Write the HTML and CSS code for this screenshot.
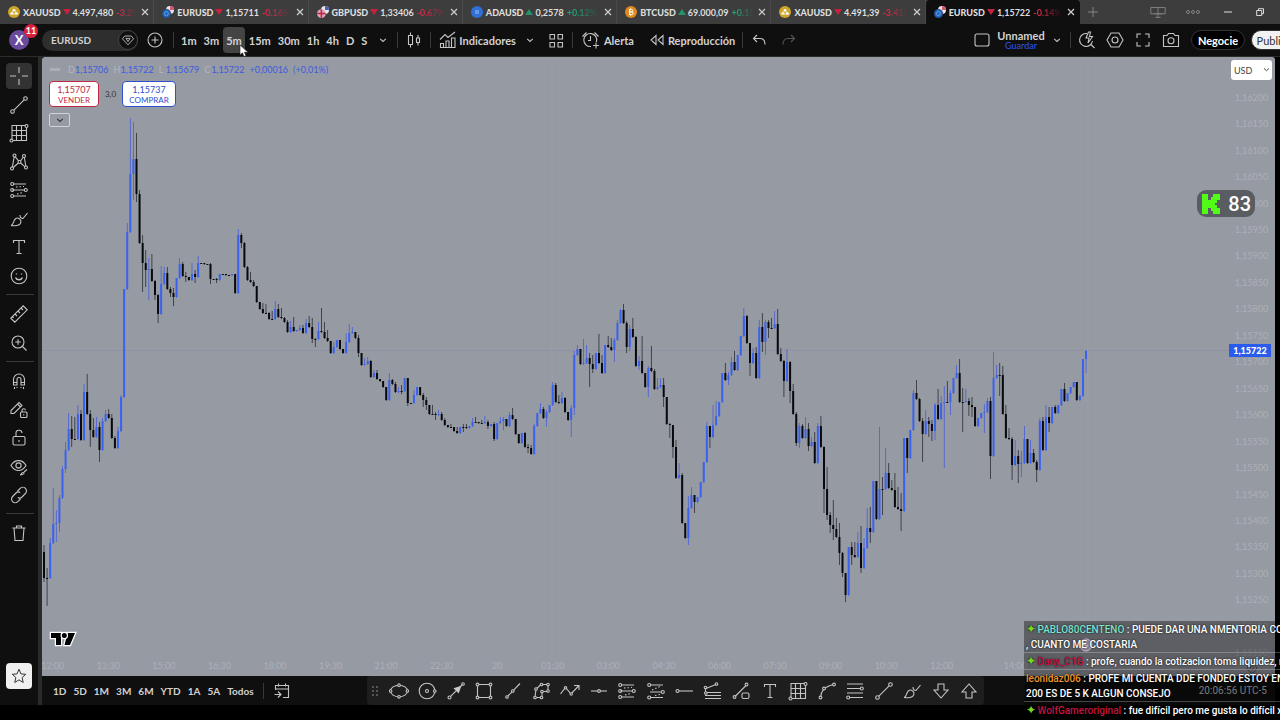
FILE: index.html
```html
<!DOCTYPE html>
<html lang="es">
<head>
    <meta charset="UTF-8">
    <meta name="viewport" content="width=device-width, initial-scale=1.0">
    <title>EURUSD 1,15722</title>
    <link rel="stylesheet" href="styles.css">
</head>
<body>
<svg class="sprite" aria-hidden="true">
    <symbol id="i-close" viewBox="0 0 10 10"><path d="M2 2l6 6M8 2l-6 6"/></symbol>
    <symbol id="i-chevron" viewBox="0 0 10 10"><path d="M2.2 3.8L5 6.4l2.8-2.6"/></symbol>
    <symbol id="i-gold" viewBox="0 0 12 12"><circle cx="6" cy="6" r="6" fill="#d0a52c" stroke="none"/><path d="M2 8.6l1-2.4h2l1 2.4zM6.2 8.6l1-2.4h2l1 2.4zM4.2 5.4l.9-2.2h1.9l.9 2.2z" fill="#fff" stroke="none"/></symbol>
    <symbol id="i-eur" viewBox="0 0 12 12"><circle cx="8" cy="4" r="4" fill="#e9e4ee" stroke="none"/><path d="M8 0a4 4 0 0 1 4 4H8z" fill="#d6566b" stroke="none"/><circle cx="4.4" cy="7.6" r="4.4" fill="#1c63c4" stroke="#3b3b3b" stroke-width=".6"/><circle cx="4.4" cy="7.6" r="2" fill="none" stroke="#6fa3d8" stroke-width=".9"/></symbol>
    <symbol id="i-gbp" viewBox="0 0 12 12"><circle cx="8" cy="4" r="4" fill="#e9e4ee" stroke="none"/><path d="M8 0a4 4 0 0 1 4 4H8z" fill="#4a5fb0" stroke="none"/><circle cx="4.4" cy="7.6" r="4.4" fill="#d9a9b8" stroke="none"/><path d="M4.4 3.4v8.4M.2 7.6h8.4" stroke="#c8203c" stroke-width="1.5"/></symbol>
    <symbol id="i-ada" viewBox="0 0 12 12"><circle cx="6" cy="6" r="6" fill="#2f6fd8" stroke="none"/><path d="M4 5h4M4 7h4" stroke="#a9c8ff" stroke-width=".9"/></symbol>
    <symbol id="i-btc" viewBox="0 0 12 12"><circle cx="6" cy="6" r="6" fill="#e08a20" stroke="none"/><path d="M4.6 3.2v5.6M4.6 3.4h1.8a1.2 1.2 0 0 1 0 2.5H4.6M4.6 5.9h2.2a1.3 1.3 0 0 1 0 2.7H4.6M5.6 2.4v1M5.6 8.6v1" stroke="#fff" stroke-width="1"/></symbol>
    <symbol id="i-cross" viewBox="0 0 20 20"><path d="M10 1v6M10 13v6M1 10h6M13 10h6"/></symbol>
    <symbol id="i-line" viewBox="0 0 20 20"><circle cx="3.5" cy="16.5" r="1.8"/><circle cx="16.5" cy="3.5" r="1.8"/><path d="M4.9 15.1L15.1 4.9"/></symbol>
    <symbol id="i-grid" viewBox="0 0 20 20"><path d="M3 17V2.500h13.500M17.500 5v12.500H4M7.500 2.500v15M12.500 2.500v15M2.500 7.500h15M2.500 12.500h15"/><circle cx="17.500" cy="3" r="1.500"/><circle cx="2.500" cy="17.500" r="1.500"/></symbol>
    <symbol id="i-pattern" viewBox="0 0 20 20"><circle cx="5.500" cy="3.500" r="1.500"/><circle cx="15" cy="4" r="1.500"/><circle cx="3" cy="16.500" r="1.500"/><circle cx="17" cy="15.500" r="1.500"/><circle cx="10.500" cy="10" r="1.500"/><path d="M5.200 5L3.300 15M6.300 4.800l3.300 4M4.200 15.500l5.200-4.500M11.500 9l2.700-3.700M15.300 5.500l1.500 8.500M11.600 11l4.200 3.600"/></symbol>
    <symbol id="i-fib" viewBox="0 0 20 20"><path d="M4 4h13M3 10h12M5 16h12"/><path d="M7 7l8-.5M8 14l6-1.500" stroke-dasharray="1.500 2"/><circle cx="3.200" cy="4" r="1.500"/><circle cx="3.200" cy="10" r="1.500"/><circle cx="16.800" cy="10" r="1.500"/><circle cx="3.200" cy="16" r="1.500"/></symbol>
    <symbol id="i-fib2" viewBox="0 0 20 20"><path d="M4 4h13M4 11h11M4 16.500h13"/><path d="M6 9l9-4M9 14.500l5-1" stroke-dasharray="1.500 2"/><circle cx="3.200" cy="4" r="1.500"/><circle cx="3.200" cy="16.500" r="1.500"/><circle cx="16.800" cy="11" r="1.500"/></symbol>
    <symbol id="i-fib3" viewBox="0 0 20 20"><path d="M2 3h16M2 7.500h13M2 12h16M5 16.500h13"/><circle cx="16.800" cy="7.500" r="1.500"/><circle cx="3.200" cy="16.500" r="1.500"/></symbol>
    <symbol id="i-brush" viewBox="0 0 20 20"><path d="M2 16.500c3-.500 2-5 4.500-6.800 2.500-1.700 6 .500 5.400 3.500-.6 3.300-5 4-9.900 3.300zM11 6c0 2 .8 3.500 3 3.500L18.500 4"/></symbol>
    <symbol id="i-text" viewBox="0 0 20 20"><path d="M4.500 6V3.500h11V6M10 3.500v13M7.500 16.500h5"/></symbol>
    <symbol id="i-smile" viewBox="0 0 20 20"><circle cx="10" cy="10" r="7.800"/><path d="M6.500 11.500c1.200 3 5.800 3 7 0M7.500 7.500v1M12.500 7.500v1" stroke-width="1.400"/></symbol>
    <symbol id="i-ruler" viewBox="0 0 20 20"><path d="M1.800 14.200L14.200 1.800l4 4L5.800 18.200zM6 10l2 2M9 7l2 2M12 4l2 2M3.500 12.500l1.200 1.200"/></symbol>
    <symbol id="i-zoom" viewBox="0 0 20 20"><circle cx="9" cy="9" r="6"/><path d="M13.500 13.500L17.500 17.500M9 6.200v5.600M6.200 9h5.600"/></symbol>
    <symbol id="i-magnet" viewBox="0 0 20 20"><path d="M4.500 14V8.500a5.500 5.500 0 0 1 11 0V14h-3.500V8.500a2 2 0 0 0-4 0V14zM4.500 11.500H8M12 11.500h3.500M5.500 16v2M8 16v1M12 16v1M14.500 16v2"/></symbol>
    <symbol id="i-pencil" viewBox="0 0 20 20"><path d="M2 13.500V10.500L10 2.500l3 3-8 8zM8.500 4l3 3"/><rect x="11.500" y="12" width="6.500" height="5.500" rx="1"/><path d="M13 12v-1.800a1.800 1.800 0 0 1 3.500 0M14.700 14.200v1.200"/></symbol>
    <symbol id="i-lock" viewBox="0 0 20 20"><rect x="4" y="8.500" width="12" height="8.500" rx="1.500"/><path d="M7 8.500V5.500a3 3 0 0 1 6-.5M10 12v2" /></symbol>
    <symbol id="i-eye" viewBox="0 0 20 20"><path d="M2 8.500C5.500 2 13.500 2 17 8.500c-1.500 2.500-4 5-7.500 5S3.500 11 2 8.500z"/><circle cx="9.500" cy="8.500" r="2.600"/><path d="M11 18c1.500 0 1-2.500 3-2.500s1 2.500-3 2.500zM15 15l3-2.500"/></symbol>
    <symbol id="i-link" viewBox="0 0 20 20"><path d="M8.500 6l2.700-2.700a3.500 3.500 0 0 1 5.200 5.200L13 12a3.500 3.500 0 0 1-4.200.5M11.500 14l-2.700 2.700a3.500 3.500 0 0 1-5.200-5.200L7 8a3.500 3.500 0 0 1 4.200-.5"/></symbol>
    <symbol id="i-trash" viewBox="0 0 20 20"><path d="M3.500 5h13M7.500 5V3h5v2M5 5l1 12.500h8L15 5"/></symbol>
    <symbol id="i-star" viewBox="0 0 20 20"><path d="M10 2.500l2.200 5.200 5.300.4-4 3.600 1.200 5.500L10 14.300l-4.700 2.900 1.200-5.500-4-3.600 5.300-.4z"/></symbol>
    <symbol id="i-ellipse" viewBox="0 0 20 20"><ellipse cx="10" cy="10" rx="8.500" ry="5.800"/><g class="dot"><circle cx="10" cy="4.200" r="1.300"/><circle cx="10" cy="15.800" r="1.300"/><circle cx="1.600" cy="10" r="1.300"/><circle cx="18.400" cy="10" r="1.300"/></g></symbol>
    <symbol id="i-circle" viewBox="0 0 20 20"><circle cx="10" cy="10" r="7.800"/><circle cx="10" cy="10" r="1.500"/><circle class="dot" cx="17.800" cy="10" r="1.300"/></symbol>
    <symbol id="i-arrow" viewBox="0 0 20 20"><circle cx="3.500" cy="16.500" r="1.500"/><circle cx="17" cy="3" r="1.300"/><path d="M4.600 15.400L16 4"/><path d="M14.500 5.500l-2 6-4-4z" fill="#d0d0d0"/></symbol>
    <symbol id="i-rect" viewBox="0 0 20 20"><path d="M3.500 3.500h13v13h-13z"/><g class="dot"><circle cx="3.500" cy="3.500" r="1.400"/><circle cx="16.500" cy="3.500" r="1.400"/><circle cx="3.500" cy="16.500" r="1.400"/><circle cx="16.500" cy="16.500" r="1.400"/></g></symbol>
    <symbol id="i-trend" viewBox="0 0 20 20"><path d="M4.500 15.500L17 2.500"/><g class="dot"><circle cx="4" cy="16" r="1.300"/><circle cx="9.800" cy="10" r="1.300"/></g></symbol>
    <symbol id="i-path" viewBox="0 0 20 20"><path d="M4 16.500L5 8l5-4.500h7v7h-6v6z"/><g class="dot"><circle cx="4" cy="16.500" r="1.300"/><circle cx="10.500" cy="16.500" r="1.300"/><circle cx="5" cy="8" r="1.300"/><circle cx="10.500" cy="3.500" r="1.300"/><circle cx="17" cy="3.500" r="1.300"/><circle cx="17" cy="10" r="1.300"/><circle cx="11" cy="10.500" r="1.300"/></g></symbol>
    <symbol id="i-poly" viewBox="0 0 20 20"><path d="M.5 13l5-6.500 5.500 6.500 7.500-8M14 4.500h5V9"/><g class="dot"><circle cx="5.500" cy="6.800" r="1.200"/><circle cx="11.200" cy="13" r="1.200"/></g></symbol>
    <symbol id="i-hline" viewBox="0 0 20 20"><path d="M2 10h16"/><circle class="dot" cx="10" cy="10" r="1.400"/></symbol>
    <symbol id="i-ray" viewBox="0 0 20 20"><path d="M4 10h15"/><circle class="dot" cx="3.500" cy="10" r="1.500"/></symbol>
    <symbol id="i-channel" viewBox="0 0 20 20"><path d="M3 7.500l11-4.500M2 11.500h16M2 14.500h16M2 17.500h16M2.500 7v5"/><g class="dot"><circle cx="2.500" cy="6.500" r="1.300"/><circle cx="13.500" cy="3" r="1.300"/><circle cx="2.800" cy="12" r="1.300"/></g></symbol>
    <symbol id="i-shape" viewBox="0 0 20 20"><path d="M4 15.500L15.500 4"/><g class="dot"><circle cx="3.500" cy="16" r="1.400"/><circle cx="15.500" cy="3.500" r="1.400"/></g><rect x="11" y="12" width="7" height="5.500" rx="1.500"/></symbol>
    <symbol id="i-curve" viewBox="0 0 20 20"><path d="M3.500 16.500C4 11 6 6 16.500 3.500"/><g class="dot"><circle cx="3.500" cy="16.500" r="1.400"/><circle cx="7" cy="7.500" r="1.400"/><circle cx="17" cy="3.500" r="1.400"/></g></symbol>
    <symbol id="i-down" viewBox="0 0 20 20"><path d="M7 3h6v6h4l-7 8-7-8h4z"/></symbol>
    <symbol id="i-up" viewBox="0 0 20 20"><path d="M7 17h6v-6h4l-7-8-7 8h4z"/></symbol>
    <symbol id="i-candles" viewBox="0 0 20 20"><path d="M6.500 2.500v3M6.500 14.500v3M4.500 5.500h4v9h-4zM14 5v3M14 12v3.500M12.500 8h3v4.500h-3z"/></symbol>
    <symbol id="i-indicators" viewBox="0 0 20 20"><path d="M2 9.500l5-5 3 3L17 2M2.500 17.500v-4h3v4zM8 17.500V11h3v6.500zM13.500 17.500V8H17v9.500zM2 17.500h15.500"/></symbol>
    <symbol id="i-layouts" viewBox="0 0 20 20"><path d="M4 4.500h4.500V9H4zM12 4.500h4.500V9H12zM4 12.500h4.500V17H4zM12 12.500h4.500V17H12z"/></symbol>
    <symbol id="i-alarm" viewBox="0 0 20 20"><path d="M15.500 12A6.500 6.500 0 1 0 10 16.500M9.500 6v4.500H7M1.500 6.500l4-4M17.500 6.500l-4-4M15 12.500v6M12 15.500h6"/></symbol>
    <symbol id="i-rewind" viewBox="0 0 20 20"><path d="M9 5.500v9l-5-4.500zM16 5.500v9l-5-4.500z"/></symbol>
    <symbol id="i-undo" viewBox="0 0 20 20"><path d="M8 5L4.500 8.500 8 12M4.500 8.500H11c3 0 5 2 5 6"/></symbol>
    <symbol id="i-redo" viewBox="0 0 20 20"><path d="M12 5l3.500 3.500L12 12M15.500 8.500H9c-3 0-5 2-5 6"/></symbol>
    <symbol id="i-square" viewBox="0 0 20 20"><rect x="3" y="4" width="14" height="12" rx="2"/></symbol>
    <symbol id="i-quick" viewBox="0 0 20 20"><path d="M10 3.500A6.500 6.500 0 1 0 15.500 11M13.500 14l4 4M11.500 2L9 8h3l-1 5 4.500-6.500h-3l1-4.500z"/></symbol>
    <symbol id="i-settings" viewBox="0 0 20 20"><path d="M6 3h8l4 7-4 7H6l-4-7z"/><circle cx="10" cy="10" r="3"/></symbol>
    <symbol id="i-full" viewBox="0 0 20 20"><path d="M4 8V4h4M12 4h4v4M16 12v4h-4M8 16H4v-4"/></symbol>
    <symbol id="i-camera" viewBox="0 0 20 20"><path d="M2.500 5.500H6L7.500 3.500h5L14 5.500h3.500v11h-15z"/><circle cx="10" cy="10.800" r="3"/></symbol>
    <symbol id="i-plus" viewBox="0 0 20 20"><circle cx="10" cy="10" r="7"/><path d="M10 6.500v7M6.500 10h7"/></symbol>
    <symbol id="i-gem" viewBox="0 0 20 20"><path d="M6 5h8l3 3.500L10 16 3 8.500z"/><path d="M7.500 8l2.500 4 2.500-4z"/></symbol>
    <symbol id="i-calendar" viewBox="0 0 20 20"><path d="M3.500 9V4.500h13v12H11M3.500 8h13M6.500 2.500v3M13.500 2.500v3M2.500 13.500h6M6 10.500l3 3-3 3"/></symbol>
    <symbol id="i-screens" viewBox="0 0 20 20"><path d="M2 5h16v7H2zM10 5v11M6 12h9M7 16h6"/></symbol>
</svg>

<header class="tabs-bar">
    <nav class="tabs">
        <a class="tab" href="#"><svg class="coin"><use href="#i-gold"/></svg><b>XAUUSD</b><i class="down"></i><span>4.497,480</span><em class="neg">-3.2%</em><svg class="close"><use href="#i-close"/></svg></a>
        <a class="tab" href="#"><svg class="coin"><use href="#i-eur"/></svg><b>EURUSD</b><i class="down"></i><span>1,15711</span><em class="neg">-0.16%</em><svg class="close"><use href="#i-close"/></svg></a>
        <a class="tab" href="#"><svg class="coin"><use href="#i-gbp"/></svg><b>GBPUSD</b><i class="down"></i><span>1,33406</span><em class="neg">-0.67%</em><svg class="close"><use href="#i-close"/></svg></a>
        <a class="tab" href="#"><svg class="coin"><use href="#i-ada"/></svg><b>ADAUSD</b><i class="up"></i><span>0,2578</span><em class="pos">+0.12%</em><svg class="close"><use href="#i-close"/></svg></a>
        <a class="tab" href="#"><svg class="coin"><use href="#i-btc"/></svg><b>BTCUSD</b><i class="up"></i><span>69.000,09</span><em class="pos">+0.1%</em><svg class="close"><use href="#i-close"/></svg></a>
        <a class="tab" href="#"><svg class="coin"><use href="#i-gold"/></svg><b>XAUUSD</b><i class="down"></i><span>4.491,39</span><em class="neg">-3.41%</em><svg class="close"><use href="#i-close"/></svg></a>
        <a class="tab active" href="#"><svg class="coin"><use href="#i-eur"/></svg><b>EURUSD</b><i class="down"></i><span>1,15722</span><em class="neg">-0.14%</em><svg class="close"><use href="#i-close"/></svg></a>
    </nav>
    <div class="window-controls">
        <svg class="wc-plus" viewBox="0 0 12 12"><path d="M6 1v10M1 6h10"/></svg>
        <svg class="wc-screens"><use href="#i-screens"/></svg>
        <svg class="wc-dots" viewBox="0 0 14 6"><circle cx="2" cy="3" r="1.500"/><circle cx="7" cy="3" r="1.500"/><circle cx="12" cy="3" r="1.500"/></svg>
        <svg class="wc-min" viewBox="0 0 8 8"><path d="M0 4h8"/></svg>
        <svg class="wc-max" viewBox="0 0 8 8"><path d="M.7 2.500h5v5h-5zM2.500 2.500V.7h5v5H5.700"/></svg>
    </div>
</header>

<div class="toolbar">
    <div class="avatar">X<span class="badge">11</span></div>
    <button class="symbol-search">EURUSD<span class="gem"><svg class="icon"><use href="#i-gem"/></svg></span></button>
    <button class="tool add"><svg class="icon"><use href="#i-plus"/></svg></button>
    <span class="sep"></span>
    <div class="intervals">
        <button>1m</button>
        <button>3m</button>
        <button class="selected">5m</button>
        <button>15m</button>
        <button>30m</button>
        <button>1h</button>
        <button>4h</button>
        <button>D</button>
        <button>S</button>
    </div>
    <button class="tool narrow"><svg class="icon small"><use href="#i-chevron"/></svg></button>
    <span class="sep"></span>
    <button class="tool wide"><svg class="icon"><use href="#i-candles"/></svg></button>
    <span class="sep"></span>
    <button class="labelled indicators"><svg class="icon"><use href="#i-indicators"/></svg>Indicadores</button>
    <button class="tool narrow"><svg class="icon small"><use href="#i-chevron"/></svg></button>
    <button class="tool wide"><svg class="icon"><use href="#i-layouts"/></svg></button>
    <span class="sep"></span>
    <button class="labelled alert"><svg class="icon"><use href="#i-alarm"/></svg>Alerta</button>
    <button class="labelled replay"><svg class="icon"><use href="#i-rewind"/></svg>Reproducción</button>
    <span class="sep"></span>
    <button class="tool wide"><svg class="icon"><use href="#i-undo"/></svg></button>
    <button class="tool"><svg class="icon dim"><use href="#i-redo"/></svg></button>

    <div class="toolbar-right">
        <button class="tool"><svg class="icon"><use href="#i-square"/></svg></button>
        <button class="layout-name">Unnamed<small>Guardar</small></button>
        <button class="tool narrow"><svg class="icon small"><use href="#i-chevron"/></svg></button>
        <span class="sep"></span>
        <button class="tool"><svg class="icon"><use href="#i-quick"/></svg></button>
        <button class="tool"><svg class="icon"><use href="#i-settings"/></svg></button>
        <button class="tool"><svg class="icon"><use href="#i-full"/></svg></button>
        <button class="tool"><svg class="icon"><use href="#i-camera"/></svg></button>
        <button class="pill trade">Negocie</button>
        <button class="pill publish">Publicar</button>
    </div>
    <svg class="pointer" viewBox="0 0 10 14"><path d="M1 1v10l2.400-2.200L5 12.500l2-1-1.700-3.300H9z"/></svg>
</div>

<div class="workspace">
    <aside class="drawing-tools">
        <div class="tool-group main-tools">
            <button class="selected"><svg class="icon"><use href="#i-cross"/></svg></button>
            <button><svg class="icon"><use href="#i-line"/></svg></button>
            <button><svg class="icon"><use href="#i-grid"/></svg></button>
            <button><svg class="icon"><use href="#i-pattern"/></svg></button>
            <button><svg class="icon"><use href="#i-fib"/></svg></button>
            <button><svg class="icon"><use href="#i-brush"/></svg></button>
            <button><svg class="icon"><use href="#i-text"/></svg></button>
            <button><svg class="icon"><use href="#i-smile"/></svg></button>
        </div>
        <hr>
        <div class="tool-group measure-tools">
            <button><svg class="icon"><use href="#i-ruler"/></svg></button>
            <button><svg class="icon"><use href="#i-zoom"/></svg></button>
        </div>
        <hr>
        <div class="tool-group lock-tools">
            <button><svg class="icon"><use href="#i-magnet"/></svg></button>
            <button><svg class="icon"><use href="#i-pencil"/></svg></button>
            <button><svg class="icon"><use href="#i-lock"/></svg></button>
            <button><svg class="icon"><use href="#i-eye"/></svg></button>
            <button><svg class="icon"><use href="#i-link"/></svg></button>
        </div>
        <hr>
        <div class="tool-group">
            <button><svg class="icon"><use href="#i-trash"/></svg></button>
        </div>
        <button class="favorites"><svg class="icon"><use href="#i-star"/></svg></button>
    </aside>

    <main>
        <section class="chart">
            <svg id="candles" class="candles" viewBox="42 57 1233 619" preserveAspectRatio="none"></svg>
            <div class="plot">
                <div class="legend">
                    <i class="dash"></i>
                    <span><u>D</u>1,15706</span>
                    <span><u>H</u>1,15722</span>
                    <span><u>L</u>1,15679</span>
                    <span><u>C</u>1,15722</span>
                    <span>+0,00016</span>
                    <span>(+0,01%)</span>
                </div>
                <div class="orders">
                    <button class="sell">1,15707<small>VENDER</small></button>
                    <span>3,0</span>
                    <button class="buy">1,15737<small>COMPRAR</small></button>
                </div>
                <button class="collapse"><svg class="icon small"><use href="#i-chevron"/></svg></button>
                <svg class="tv-logo" viewBox="0 0 28 16"><path d="M2 2h10v12H7V7H2zM18.500 2H26l-5 12h-5.500z"/><circle cx="15.300" cy="4.500" r="2.500"/></svg>
                <div class="time-axis">
                    <span>12:00</span><span>13:30</span><span>15:00</span><span>16:30</span><span>18:00</span><span>19:30</span><span>21:00</span><span>22:30</span><span>20</span><span>01:30</span><span>03:00</span><span>04:30</span><span>06:00</span><span>07:30</span><span>09:00</span><span>10:30</span><span>12:00</span><span class="late">14:00</span>
                </div>
            </div>
            <div class="price-axis">
                <select class="currency" aria-label="Moneda"><option>USD</option></select>
                <svg class="currency-arrow"><use href="#i-chevron"/></svg>
                <div id="prices" class="prices"></div>
                <strong class="last-price">1,15722</strong>
                <svg class="axis-settings icon" viewBox="0 0 20 20"><use href="#i-settings"/></svg>
            </div>
        </section>

        <footer>
            <div class="ranges">
                <button>1D</button>
                <button>5D</button>
                <button>1M</button>
                <button>3M</button>
                <button>6M</button>
                <button>YTD</button>
                <button>1A</button>
                <button>5A</button>
                <button>Todos</button>
            </div>
            <span class="sep"></span>
            <button class="tool goto"><svg class="icon"><use href="#i-calendar"/></svg></button>
            <div class="favorite-tools">
                <svg class="grip" viewBox="0 0 8 12"><path d="M1 2h2M5 2h2M1 6h2M5 6h2M1 10h2M5 10h2"/></svg>
                <button><svg class="icon"><use href="#i-ellipse"/></svg></button>
                <button><svg class="icon"><use href="#i-circle"/></svg></button>
                <button><svg class="icon"><use href="#i-arrow"/></svg></button>
                <button><svg class="icon"><use href="#i-rect"/></svg></button>
                <button><svg class="icon"><use href="#i-trend"/></svg></button>
                <button><svg class="icon"><use href="#i-path"/></svg></button>
                <button><svg class="icon"><use href="#i-poly"/></svg></button>
                <button><svg class="icon"><use href="#i-hline"/></svg></button>
                <button><svg class="icon"><use href="#i-fib"/></svg></button>
                <button><svg class="icon"><use href="#i-fib2"/></svg></button>
                <button><svg class="icon"><use href="#i-ray"/></svg></button>
                <button><svg class="icon"><use href="#i-channel"/></svg></button>
                <button><svg class="icon"><use href="#i-shape"/></svg></button>
                <button><svg class="icon"><use href="#i-text"/></svg></button>
                <button><svg class="icon"><use href="#i-grid"/></svg></button>
                <button><svg class="icon"><use href="#i-curve"/></svg></button>
                <button><svg class="icon"><use href="#i-fib3"/></svg></button>
                <button><svg class="icon"><use href="#i-line"/></svg></button>
                <button><svg class="icon"><use href="#i-brush"/></svg></button>
                <button><svg class="icon"><use href="#i-down"/></svg></button>
                <button><svg class="icon"><use href="#i-up"/></svg></button>
            </div>
            <time>20:06:56 UTC-5</time>
        </footer>
    </main>
</div>

<div class="viewers">
    <svg viewBox="0 0 18 20"><path d="M0 0h6v6h3V3h2V0h7v6h-3v3h-2v2h2v3h3v6h-7v-3H9v-3H6v6H0z"/></svg>
    83
</div>

<section class="chat">
    <p><i>✦</i> <b class="teal">PABLO80CENTENO</b> : PUEDE DAR UNA NMENTORIA CON<br>, CUANTO ME COSTARIA</p>
    <p><i>✦</i> <b class="red">Dany_C1G</b> : profe, cuando la cotizacion toma liquidez, no</p>
    <p><b class="orange">leonidaz006</b> : PROFE MI CUENTA DDE FONDEO ESTOY EN L<br>200 ES DE 5 K ALGUN CONSEJO</p>
    <p><i>✦</i> <b class="red">WolfGameroriginal</b> : fue difícil pero me gusta lo difícil xd</p>
    <svg class="flash" viewBox="0 0 14 14"><circle cx="7" cy="7" r="6"/><path d="M8 3L5 7.500h4L6 11"/></svg>
</section>
<script src="chart.js"></script>
</body>
</html>
```
FILE: styles.css
```css
* {
    box-sizing: border-box;
}

body {
    margin: 0;
    height: 100vh;
    overflow: hidden;
    display: flex;
    flex-direction: column;
    padding-bottom: 15px;
    background: #000;
    color: #d2d2d2;
    font-family: Lato, "Open Sans", sans-serif;
    font-size: 11px;
    font-weight: 700;
}

button {
    padding: 0;
    border: 0;
    background: none;
    color: inherit;
    font: inherit;
    display: flex;
    flex: none;
    align-items: center;
    justify-content: center;
}

.sprite {
    display: none;
}

.icon {
    width: 20px;
    height: 20px;
    flex: none;
    fill: none;
    stroke: #c4c4c4;
    stroke-width: 1.1;
}

.icon.small {
    width: 10px;
    height: 10px;
}

.icon.dim {
    stroke: #555;
}

.dot {
    fill: #1e1e1e;
}

.sep {
    width: 1px;
    height: 16px;
    flex: none;
    background: #3a3a3a;
}

/* browser tabs */
.tabs-bar {
    height: 24px;
    flex: none;
    display: flex;
    background: #3d3d3d;
}

.tabs {
    flex: 1;
    min-width: 0;
    display: flex;
}

.tab {
    flex: 1 1 0;
    min-width: 0;
    display: flex;
    align-items: center;
    padding: 0 3px 0 8px;
    border-right: 1px solid #4a4a4a;
    color: #dedede;
    text-decoration: none;
    font-size: 9px;
    white-space: nowrap;
}

.tab.active {
    background: #0f0f0f;
    border-radius: 4px 4px 0 0;
    border-color: #0f0f0f;
}

.coin {
    width: 12px;
    height: 12px;
    flex: none;
    margin-right: 3px;
    fill: none;
}

.tab i {
    margin: 0 2px;
    border: 4px solid transparent;
}

.tab .down {
    border-top: 6px solid #c4233f;
    border-bottom: 0;
}

.tab .up {
    border-bottom: 6px solid #22936b;
    border-top: 0;
}

.tab em {
    flex: 1;
    min-width: 0;
    margin-left: 3px;
    overflow: hidden;
    font-style: normal;
    mask-image: linear-gradient(to right, #000 20%, transparent 95%);
}

.neg {
    color: #d8294a;
}

.pos {
    color: #26a078;
}

.close {
    width: 10px;
    height: 10px;
    flex: none;
    margin-left: 2px;
    stroke: #cfcfcf;
    stroke-width: 1.2;
}

.window-controls {
    width: 200px;
    flex: none;
    display: flex;
    align-items: center;
    padding-left: 7px;
    fill: none;
    stroke: #858585;
}

.wc-plus {
    width: 12px;
    height: 12px;
}

.wc-screens {
    width: 18px;
    height: 18px;
    margin-left: 50px;
}

.wc-dots {
    width: 14px;
    height: 6px;
    margin-left: 19px;
}

.wc-min,
.wc-max {
    width: 8px;
    height: 8px;
    margin-left: 24px;
    stroke: #ddd;
}

/* top toolbar */
.toolbar {
    position: relative;
    height: 33px;
    flex: none;
    display: flex;
    align-items: center;
    padding-left: 9px;
    background: #0f0f0f;
    border-bottom: 1px solid #2b2b2b;
}

.avatar {
    position: relative;
    width: 20px;
    height: 20px;
    flex: none;
    margin-right: 13px;
    border-radius: 50%;
    background: #6a4a9c;
    color: #fff;
    font-size: 13px;
    line-height: 20px;
    text-align: center;
}

.badge {
    position: absolute;
    left: 15px;
    top: -6px;
    width: 14px;
    height: 14px;
    border-radius: 50%;
    background: #d8213f;
    font-size: 9px;
    line-height: 14px;
}

.symbol-search {
    width: 96px;
    height: 21px;
    justify-content: space-between;
    padding-left: 9px;
    border-radius: 11px;
    background: #2e2e2e;
    font-size: 10px;
}

.gem {
    width: 20px;
    height: 20px;
    border: 1px solid #444;
    border-radius: 50%;
    background: #111;
    display: flex;
    align-items: center;
    justify-content: center;
}

.gem .icon {
    width: 16px;
    height: 16px;
}

.tool {
    width: 28px;
    height: 28px;
}

.tool.add {
    margin: 0 4px 0 3px;
}

.tool.narrow {
    width: 20px;
}

.tool.wide {
    width: 32px;
}

.intervals {
    display: flex;
    gap: 1px;
    margin-left: 4px;
}

.intervals button {
    height: 26px;
    padding: 0 3px;
    border-radius: 4px;
}

.intervals .selected {
    background: #444;
}

.intervals + .narrow {
    margin: 0 4px 0 3px;
}

.labelled {
    gap: 3px;
}

.indicators {
    gap: 1px;
    margin: 0 4px 0 7px;
}

.alert {
    margin: 0 13px 0 8px;
}

.replay {
    gap: 1px;
    margin-right: 7px;
}

.toolbar-right {
    width: 312px;
    flex: none;
    display: flex;
    align-items: center;
    margin-left: auto;
    overflow: hidden;
}

.layout-name {
    width: 50px;
    flex-direction: column;
    line-height: 11px;
}

.layout-name small {
    color: #2f55f0;
    font-size: 9px;
    font-weight: 400;
    line-height: 9px;
}

.toolbar-right .narrow {
    width: 22px;
}

.toolbar-right .sep {
    margin: 0 2px;
}

.pill {
    width: 54px;
    height: 20px;
    margin-left: 6px;
    border: 1px solid #333;
    border-radius: 10px;
    background: #000;
    color: #fff;
}

.publish {
    width: 50px;
    background: #f2f2f2;
    color: #333;
    font-weight: 400;
}

.pointer {
    position: absolute;
    left: 239px;
    top: 20px;
    width: 10px;
    height: 14px;
    z-index: 2;
    fill: #fff;
    stroke: #222;
    stroke-width: .6;
}

/* left tools */
.workspace {
    flex: 1;
    min-height: 0;
    display: flex;
}

.drawing-tools {
    width: 42px;
    flex: none;
    display: flex;
    flex-direction: column;
    padding: 6px 0 16px 6px;
    background: #0f0f0f;
    border-right: 4px solid #2b2b2b;
}

.tool-group {
    display: flex;
    flex-direction: column;
    justify-content: space-between;
}

.main-tools {
    height: 226px;
}

.measure-tools {
    height: 55px;
}

.lock-tools {
    height: 140px;
}

.drawing-tools button {
    width: 26px;
    height: 26px;
    border-radius: 4px;
}

.drawing-tools .selected {
    background: #333;
}

.drawing-tools hr {
    width: 28px;
    height: 1px;
    margin: 5px 0 6px;
    border: 0;
    background: #3a3a3a;
}

.drawing-tools .favorites {
    margin-top: auto;
    background: #f0f0f0;
}

.favorites .icon {
    width: 18px;
    height: 18px;
    stroke: #333;
}

/* chart */
main {
    flex: 1;
    min-width: 0;
    display: flex;
    flex-direction: column;
}

.chart {
    position: relative;
    flex: 1;
    min-height: 0;
    display: flex;
    margin-right: 5px;
    overflow: hidden;
    border-radius: 3px 3px 0 0;
    background: #969aa3;
}

.candles {
    position: absolute;
    inset: 0;
    width: 100%;
    height: 100%;
}

.plot {
    position: relative;
    flex: 1;
    min-width: 0;
    display: flex;
    flex-direction: column;
    align-items: flex-start;
    padding: 5px 0 4px 7px;
}

.legend {
    display: flex;
    align-items: center;
    gap: 5px;
    height: 14px;
    color: #3d5be0;
    font-size: 9px;
    font-weight: 400;
}

.legend u {
    display: inline-block;
    width: 7px;
    color: #b4b7be;
    text-decoration: none;
}

.dash {
    width: 10px;
    height: 3px;
    margin: 0 3px 0 1px;
    background: #abaeb5;
}

.orders {
    display: flex;
    align-items: center;
    margin: 5px 0 6px;
    font-size: 8px;
    font-weight: 400;
    color: #33363c;
}

.orders span {
    width: 23px;
    text-align: center;
}

.orders button {
    width: 50px;
    height: 26px;
    flex-direction: column;
    border: 1px solid #c22645;
    border-radius: 4px;
    background: #fff;
    color: #c22645;
    font-size: 9px;
    line-height: 11px;
}

.orders small {
    font-size: 8px;
    line-height: 10px;
}

.orders .buy {
    width: 54px;
    border-color: #2f4fd0;
    color: #2f4fd0;
}

.collapse {
    width: 21px;
    height: 14px;
    border: 1px solid #d0d2d6;
    border-radius: 2px;
}

.collapse .icon {
    stroke: #333;
}

.tv-logo {
    width: 28px;
    height: 16px;
    margin-top: auto;
    fill: #000;
    stroke: #fff;
    stroke-width: 2.5;
    paint-order: stroke;
}

.time-axis {
    display: flex;
    width: 1000px;
    margin: 12px 0 0 -24px;
    color: #adb0b8;
    font-size: 9px;
    font-weight: 400;
    line-height: 13px;
}

.time-axis span {
    flex: 1 1 0;
    text-align: center;
}

.time-axis .late {
    margin: 0 -18px 0 18px;
}

.price-axis {
    position: relative;
    width: 46px;
    display: flex;
    flex-direction: column;
    padding: 3px 3px 10px 2px;
}

.currency {
    width: 41px;
    height: 20px;
    flex: none;
    padding: 0 3px;
    border: 0;
    border-radius: 3px;
    background: #fff;
    color: #444;
    font: 400 9px Lato, sans-serif;
    appearance: none;
}

.currency-arrow {
    position: absolute;
    right: 4px;
    top: 8px;
    width: 9px;
    height: 9px;
    fill: none;
    stroke: #333;
}

.prices {
    flex: 1;
    display: flex;
    flex-direction: column;
    margin-top: 4px;
    color: #adb0b8;
    font-size: 9px;
    font-weight: 400;
}

.prices span {
    flex: 1;
    display: flex;
    align-items: center;
    justify-content: center;
}

.last-price {
    position: absolute;
    left: 0;
    top: 47.3%;
    width: 42px;
    margin-top: -6px;
    background: #2b5bea;
    color: #fff;
    font-size: 9px;
    line-height: 13px;
    text-align: center;
}

.axis-settings {
    position: absolute;
    right: 17px;
    bottom: 2px;
    width: 12px;
    height: 12px;
    stroke: #444;
}

/* bottom bar */
footer {
    height: 29px;
    display: flex;
    align-items: center;
    margin-right: 5px;
    padding-left: 11px;
    background: #0f0f0f;
}

.ranges {
    display: flex;
    gap: 7px;
    margin-right: 9px;
    font-size: 10px;
}

.goto {
    margin-left: 4px;
}

.favorite-tools {
    width: 617px;
    height: 29px;
    display: flex;
    align-items: center;
    margin-left: 71px;
    padding-left: 4px;
    border-radius: 4px;
    background: #1e1e1e;
}

.favorite-tools button {
    flex: 1;
    height: 28px;
}

.grip {
    width: 8px;
    height: 12px;
    margin-right: 6px;
    stroke: #555;
    stroke-width: 2;
}

footer time {
    margin-left: auto;
    padding-right: 8px;
    color: #c4c4c4;
    font: 400 10px Roboto, sans-serif;
}

/* stream overlay */
.viewers {
    position: absolute;
    right: 25px;
    top: 190px;
    height: 27px;
    display: flex;
    align-items: center;
    gap: 8px;
    padding: 0 4px 0 5px;
    border-radius: 9px;
    background: #595c61;
    color: #fff;
    font: 500 20px Roboto, sans-serif;
}

.viewers svg {
    width: 18px;
    height: 20px;
    fill: #53fc18;
}

.flash {
    position: absolute;
    right: 187px;
    bottom: 68px;
    width: 14px;
    height: 14px;
    z-index: -1;
    fill: #8d8096;
    stroke: #cbb8d4;
}

.chat {
    position: absolute;
    right: 0;
    bottom: 0;
    z-index: 1;
    width: 256px;
    height: 99px;
    overflow: hidden;
    background: rgba(0, 0, 0, .38);
    color: #fff;
    font: 500 10px/15px Roboto, sans-serif;
    white-space: nowrap;
    text-shadow: 0 0 2px #000;
}

.chat p {
    margin: 0;
    padding: 1px 2px 0;
    border-bottom: 1px solid rgba(255, 255, 255, .25);
}

.chat p:last-of-type {
    border: 0;
}

.chat i {
    display: inline-block;
    width: 9px;
    color: #7ad81e;
    font: 12px/12px "DejaVu Sans", sans-serif;
}

.chat b {
    font-weight: 500;
}

.teal {
    color: #7fe3cf;
}

.red {
    color: #c4123f;
}

.orange {
    color: #f0962a;
}
```
FILE: chart.js
```js
// [close, high, low] in chart units, every candle opens at the previous close
const candles = [
  [578,545,582],[578,568,606],[543,538],[524,488],[523,510,542],[498,495,532],[469,466],[450,442,473],[429,413],[439,416,447],
  [439,417],[414,405],[440,410],[392,384],[414,374],[430,410,447],[437,418],[427,417],[450,422,462],[421,418],
  [414,410],[418,409],[438,414],[448,436],[431,427],[397,395],[289],[232,223],[174,118],[159,122,200],
  [194,133,202],[243,190],[263,235,292],[270,250,287],[269,258,300],[281,254],[295,280,300],[314,294,323],[284,266],[273,267],
  [289,267],[293,287,297],[297,288,306],[278],[264,258],[276,262],[277,272,282],[280],[274,263],[277,270,283],
  [263,256],[263],[264],[264],[279,263,284],[279],[280,278,283],[274],[274],[275],
  [275],[274],[293],[235,229],[243,233,248],[267,242],[280,266],[282,272],[286,280],[302],
  [309],[313,303],[313,304],[319,312],[319,311],[309,301],[317,304],[318,308],[322,317],[332,320],
  [327,321],[331,317],[330],[328,325],[333,325],[323,319],[327,316],[339,318,343],[339,338,347],[331,322],
  [332,308],[338,322],[341,330],[353],[347,342],[340],[349],[353],[342,333],[333,324],
  [332,327],[338],[353,335,357],[365,353],[364,358],[361,357],[377,360],[373,370],[379,370],[381],
  [387],[400],[380,373],[384,379],[392,382],[391,387],[391,385,394],[378],[403,378,406],[403],
  [395,390],[387],[395],[400,393,407],[405,397,410],[414],[414,405],[415,412,420],[414,410],[420,412],
  [425,418],[427],[427,424],[431],[433,427],[427],[427,424,432],[428,424],[426],[422,418],
  [422,417],[423],[423,420],[422,416],[426,420,429],[424],[439,422,441],[423],[421,417],[419,417,430],
  [426],[415,412],[419,408],[434],[443],[433],[447,432],[448,444,453],[454,445],[426,424],
  [413],[409,403],[418,407],[412,410,427],[405],[385,382],[402,383],[403,395],[398,392],[412,397],
  [420],[408,405,437],[355,351,415],[349,345],[364],[363,339],[358,345],[364,353,387],[369,355,373],[353],
  [363,334],[373,355],[345],[347,336],[350,338],[340,338,362],[323,320],[310,309],[323,304],[347,321,353],
  [329,325,351],[337,318],[366,336],[361,356,370],[373,336],[387],[368,366,397],[371,346],[389,369],[387,378],
  [385,378],[397,378,407],[424],[425,423,438],[447,425,458],[478,440],[475,463],[523,473],[538],[508,496,545],
  [495,487],[502,495,513],[497],[482],[462],[426,422],[437,426,448],[425,405],[416,401],[402],
  [373],[380,363],[375,372,385],[362,357],[370,351],[355],[336],[316,308],[343,315],[363,343,376],
  [353,348],[378,347],[327,320],[342,313,352],[322,320,355],[328,320,338],[328,318],[324,311],[354,309],[361,348],
  [381,360,397],[362,349],[391,361,403],[414,384],[443,412,446],[426,423,448],[438,424],[429,417],[446,423,451],[442,437],
  [463,432],[426,423],[447,416],[489,446,513],[515,467,520],[525,512,533],[529,500,540],[537,518],[553,523,565],[573,552,577],
  [595,573,602],[547],[555,542,565],[557,542],[543,532],[568,526,573],[548,538],[528,508],[532,507,543],[481],
  [519],[489,427],[489,477,515],[473,448],[488,463],[490,480],[507,473],[509,487],[511,493,531],[438],
  [458,438,473],[430],[393,390],[399,380],[421,398],[434,418,462],[421,410],[424,417,437],[431,420,441],[405,403,440],
  [419,389],[403,396],[402,386,468],[402,381],[393,390,415],[378],[373,365],[402,359],[402,388,432],[401,389],
  [405,398,416],[407,397,417],[426],[418],[413],[412,404,433],[401,398],[456,397,479],[378,352],[375,365],
  [375,363,396],[414,366],[438,405],[439,428],[465,437,480],[456,440],[464,450,483],[463,451,477],[439,426],[463],
  [453,440],[462,449],[470,460,482],[421,418],[450,417],[417,405],[423,407,432],[407],[413,405],[405],
  [389],[401,383],[393],[387],[382],[400],[396,395],[359],[351,350,373]
];

const svg = document.getElementById('candles');
const step = 3.083;
let open = 552;
let shapes = `
  <path d="M552 57v600M1088 57v600" stroke="#9b9ea7" stroke-width="1"/>
  <path d="M42 350.500h1187" stroke="#888ba0" stroke-width="1" stroke-dasharray="1 1"/>
`;
candles.forEach(([close, high, low], i) => {
  const x = 44 + i * step;
  const top = Math.min(open, close);
  const bottom = Math.max(open, close);
  const up = close < open;
  const h = Math.min(high || top, top);
  const l = Math.max(low || bottom, bottom + 1);
  shapes += `
    <rect x="${x - 0.4}" y="${h}" width="0.8" height="${l - h}" fill="${up ? '#4a5fd8' : '#2c2e33'}"/>
    <rect x="${x - 1}" y="${top}" width="2" height="${Math.max(bottom - top, 1)}" fill="${up ? '#3a62f0' : '#08090c'}"/>
  `;
  open = close;
});
svg.innerHTML = shapes;

const prices = document.getElementById('prices');
for (let p = 116200; p >= 115150; p -= 50) {
  const label = document.createElement('span');
  label.textContent = '1,' + String(p).slice(1);
  prices.appendChild(label);
}
```
